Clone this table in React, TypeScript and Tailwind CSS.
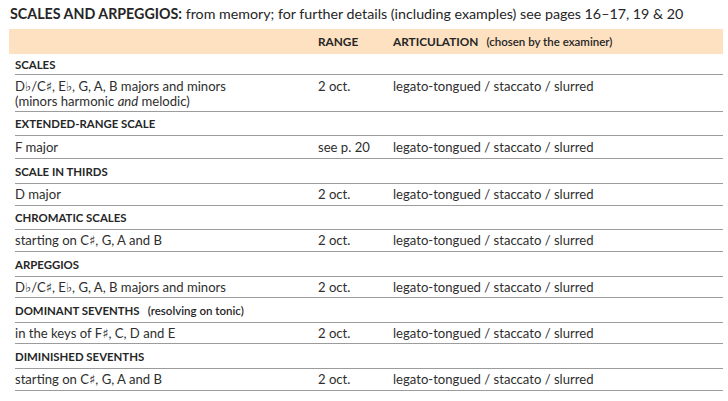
const font = { fontFamily: '"Lato", "DejaVu Sans", sans-serif' };

const ART = "legato-tongued / staccato / slurred";

type Section = {
  title: string;
  note?: string;
  head: string;
  rows: { label: React.ReactNode; range: string; h: string }[];
};

const sections: Section[] = [
  {
    title: "SCALES",
    head: "h-[21px]",
    rows: [
      {
        label: (
          <>
            D♭/C♯, E♭, G, A, B majors and minors
            <br />
            (minors harmonic <i>and</i> melodic)
          </>
        ),
        range: "2 oct.",
        h: "h-[37px] items-start pt-[4px]",
      },
    ],
  },
  { title: "EXTENDED-RANGE SCALE", head: "h-[24px]", rows: [{ label: "F major", range: "see p. 20", h: "h-[23px]" }] },
  { title: "SCALE IN THIRDS", head: "h-[25px]", rows: [{ label: "D major", range: "2 oct.", h: "h-[22px]" }] },
  {
    title: "CHROMATIC SCALES",
    head: "h-[24px]",
    rows: [{ label: "starting on C♯, G, A and B", range: "2 oct.", h: "h-[22px]" }],
  },
  {
    title: "ARPEGGIOS",
    head: "h-[25px]",
    rows: [{ label: "D♭/C♯, E♭, G, A, B majors and minors", range: "2 oct.", h: "h-[21px]" }],
  },
  {
    title: "DOMINANT SEVENTHS",
    note: "(resolving on tonic)",
    head: "h-[25px]",
    rows: [{ label: "in the keys of F♯, C, D and E", range: "2 oct.", h: "h-[21px]" }],
  },
  {
    title: "DIMINISHED SEVENTHS",
    head: "h-[25px]",
    rows: [{ label: "starting on C♯, G, A and B", range: "2 oct.", h: "h-[22px]" }],
  },
];

export default function App() {
  return (
    <div className="w-[728px] h-[401px] bg-white text-[#2e2e2e] overflow-hidden" style={font}>
      <div className="h-[29px] pl-[10px] pt-[5px] text-[14.25px] leading-[18px] whitespace-nowrap text-[#262626]">
        <span className="font-bold">SCALES AND ARPEGGIOS:</span> from memory; for further details (including
        examples) see pages 16–17, 19 &amp; 20
      </div>

      <div className="ml-[15px] w-[708px]">
        <div className="-ml-[6px] pl-[6px] h-[25px] bg-[#fde1c1] flex items-center text-[11.8px] font-bold text-[#262626]">
          <div className="w-[303px]" />
          <div className="w-[75px]">RANGE</div>
          <div className="flex items-baseline">
            ARTICULATION
            <span className="ml-[8px] text-[11.5px] font-semibold">(chosen by the examiner)</span>
          </div>
        </div>

        {sections.map((s) => (
          <div key={s.title}>
            <div
              className={`${s.head} pt-[1px] flex items-center border-b border-[#9c9c9c] text-[11.4px] font-bold text-[#262626]`}
            >
              {s.title}
              {s.note && <span className="ml-[8px] text-[11.5px] font-semibold">{s.note}</span>}
            </div>
            {s.rows.map((r, i) => (
              <div key={i} className={`${r.h} flex items-center border-b border-[#9c9c9c] text-[13.1px] leading-[15px]`}>
                <div className="w-[303px]">{r.label}</div>
                <div className="w-[75px]">{r.range}</div>
                <div>{ART}</div>
              </div>
            ))}
          </div>
        ))}
      </div>
    </div>
  );
}
